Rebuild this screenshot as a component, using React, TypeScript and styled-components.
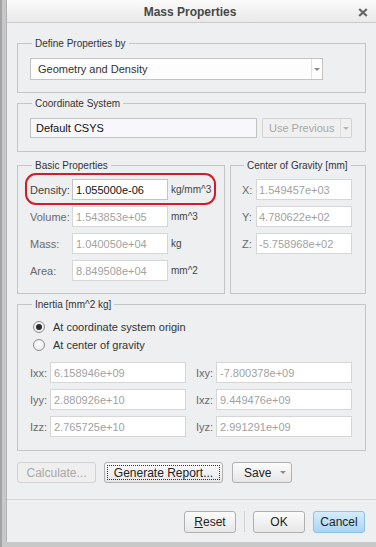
import React from 'react';
import styled, { createGlobalStyle } from 'styled-components';

const Global = createGlobalStyle`
  html, body { margin: 0; padding: 0; }
  body { font-family: "Liberation Sans", Arial, sans-serif; background: #c8c8c8; }
  * { box-sizing: border-box; }
`;

const Frame = styled.div`
  width: 376px;
  height: 547px;
  background: #c8c8c8;
  box-shadow: inset 2px 0 0 #a3a3a3;
  padding: 0 0 5px 6px;
  display: flex;
`;

const Dialog = styled.div`
  flex: 1;
  display: flex;
  flex-direction: column;
  background: #eeeff0;
  border-left: 1px solid #b2b2b2;
`;

const TitleBar = styled.div`
  flex: none;
  height: 23px;
  padding-top: 2px;
  display: grid;
  grid-template-columns: 1fr auto 1fr;
  align-items: center;
  background: linear-gradient(#fbfbfb, #e9e9e9);
  border-bottom: 1px solid #cbcbcb;
`;

const Title = styled.div`
  grid-column: 2;
  font-size: 12px;
  font-weight: bold;
  color: #474747;
  margin-right: 3px;
`;

const Close = styled.div`
  grid-column: 3;
  justify-self: end;
  margin-right: 8px;
  display: flex;
`;

const Content = styled.div`
  display: flex;
  flex-direction: column;
  padding: 14px 10px 16px 10px;
`;

const Group = styled.fieldset<{ $mt?: number; $pt?: number; $pb?: number; $pl?: number; $w?: number }>`
  margin: ${p => p.$mt ?? 0}px 0 0 0;
  min-width: 0;
  border: 1px solid #c5c5c5;
  padding: ${p => p.$pt ?? 8}px 10px ${p => p.$pb ?? 12}px ${p => p.$pl ?? 12}px;
  ${p => (p.$w ? `width: ${p.$w}px; flex: none;` : 'flex: 1;')}
`;

const Legend = styled.legend`
  font-size: 10px;
  line-height: 13px;
  color: #333;
  padding: 0 3px;
  margin-left: 2px;
`;

const Select = styled.div`
  width: 293px;
  height: 22px;
  display: flex;
  border: 1px solid #c3c3c3;
  background: #fdfdfd;
`;

const SelectText = styled.div`
  flex: 1;
  font-size: 11px;
  color: #333;
  padding-left: 7px;
  display: flex;
  align-items: center;
`;

const ArrowCell = styled.div<{ $light?: boolean }>`
  width: 11px;
  flex: none;
  display: flex;
  align-items: center;
  justify-content: center;
  border-left: 1px solid ${p => (p.$light ? '#dadada' : '#e2e2e2')};
`;

const Tri = styled.span<{ $c?: string }>`
  width: 0;
  height: 0;
  border-left: 3px solid transparent;
  border-right: 3px solid transparent;
  border-top: 3px solid ${p => p.$c ?? '#8c8c8c'};
`;

const Row = styled.div<{ $gap?: number }>`
  display: flex;
  align-items: center;
  gap: ${p => p.$gap ?? 0}px;
`;

const Field = styled.div<{ $w: number; $h?: number; $dis?: boolean; $bg?: string; $pl?: number }>`
  width: ${p => p.$w}px;
  height: ${p => p.$h ?? 21}px;
  flex: none;
  border: 1px solid ${p => (p.$dis ? '#d6d6d6' : '#c4c4c4')};
  background: ${p => p.$bg ?? '#ffffff'};
  font-size: 11px;
  color: ${p => (p.$dis ? '#a2a2a2' : '#111')};
  padding-left: ${p => p.$pl ?? 3}px;
  display: flex;
  align-items: center;
  white-space: nowrap;
`;

const DisabledDrop = styled.div`
  width: 90px;
  height: 20px;
  display: flex;
  border: 1px solid #d3d3d3;
  border-radius: 2px;
  background: #f0f0f0;
`;

const DropText = styled.div`
  flex: 1;
  font-size: 11px;
  color: #a8a8a8;
  padding-left: 6px;
  display: flex;
  align-items: center;
`;

const Columns = styled.div`
  display: flex;
  gap: 5px;
  margin-top: 7px;
`;

const Stack = styled.div<{ $gap?: number; $mt?: number }>`
  display: flex;
  flex-direction: column;
  gap: ${p => p.$gap ?? 6}px;
  margin-top: ${p => p.$mt ?? 0}px;
`;

const PropRow = styled.div`
  position: relative;
  display: flex;
  align-items: center;
`;

const Label = styled.span<{ $w: number; $dim?: boolean }>`
  width: ${p => p.$w}px;
  flex: none;
  font-size: 11px;
  color: ${p => (p.$dim ? '#6a6a6a' : '#444')};
  white-space: nowrap;
`;

const Unit = styled.span`
  margin-left: 3px;
  font-size: 10px;
  color: #444;
  white-space: nowrap;
`;

const Highlight = styled.div`
  position: absolute;
  left: -5px;
  right: -2px;
  top: -6px;
  bottom: -5px;
  border: 2px solid #d21d26;
  border-radius: 11px;
  pointer-events: none;
`;

const RadioRow = styled.div`
  height: 18px;
  display: flex;
  align-items: center;
  padding-left: 3px;
  gap: 8px;
  font-size: 11px;
  color: #333;
`;

const RadioCircle = styled.span<{ $on?: boolean }>`
  width: 12px;
  height: 12px;
  border-radius: 50%;
  border: 1px solid #8d8d8d;
  background: radial-gradient(circle at 50% 40%, #ffffff, #e4e4e4);
  display: flex;
  align-items: center;
  justify-content: center;
  &::after {
    content: '';
    display: ${p => (p.$on ? 'block' : 'none')};
    width: 6px;
    height: 6px;
    border-radius: 50%;
    background: #2b2b2b;
  }
`;

const InertiaGrid = styled.div`
  display: grid;
  grid-template-columns: 156px 156px;
  column-gap: 10px;
  row-gap: 6px;
  margin-top: 8px;
`;

const ButtonRow = styled.div`
  display: flex;
  margin-top: 11px;
`;

const Button = styled.div<{ $w: number; $h?: number; $dis?: boolean; $blue?: boolean; $ml?: number }>`
  width: ${p => p.$w}px;
  height: ${p => p.$h ?? 21}px;
  margin-left: ${p => p.$ml ?? 0}px;
  flex: none;
  display: flex;
  align-items: center;
  justify-content: center;
  border: 1px solid ${p => (p.$dis ? '#d2d2d2' : p.$blue ? '#8fc0e6' : '#b0b0b0')};
  border-radius: 3px;
  background: ${p =>
    p.$dis
      ? '#efefef'
      : p.$blue
      ? 'linear-gradient(#d6ecfc, #aad5f4)'
      : 'linear-gradient(#fbfbfb, #e7e7e7)'};
  font-size: 12px;
  color: ${p => (p.$dis ? '#a9a9a9' : '#222')};
  white-space: nowrap;
  position: relative;
`;

const Focus = styled.span`
  position: absolute;
  inset: 2px;
  border: 1px dotted #333;
  pointer-events: none;
`;

const SaveButton = styled(Button)`
  justify-content: space-between;
  padding: 0 5px 0 11px;
`;

const Divider = styled.div`
  height: 1px;
  flex: none;
  background: #d5d5d5;
`;

const Footer = styled.div`
  flex: 1;
  display: flex;
  justify-content: flex-end;
  align-items: flex-start;
  gap: 8px;
  padding: 11px 11px 0 0;
`;

const VSep = styled.div`
  width: 1px;
  height: 21px;
  background: #d3d3d3;
  align-self: flex-start;
`;

const Under = styled.span`
  text-decoration: underline;
`;

const basic = [
  { label: 'Volume:', value: '1.543853e+05', unit: 'mm^3' },
  { label: 'Mass:', value: '1.040050e+04', unit: 'kg' },
  { label: 'Area:', value: '8.849508e+04', unit: 'mm^2' },
];

const cog = [
  { label: 'X:', value: '1.549457e+03' },
  { label: 'Y:', value: '4.780622e+02' },
  { label: 'Z:', value: '-5.758968e+02' },
];

const inertia = [
  { label: 'Ixx:', value: '6.158946e+09' },
  { label: 'Ixy:', value: '-7.800378e+09' },
  { label: 'Iyy:', value: '2.880926e+10' },
  { label: 'Ixz:', value: '9.449476e+09' },
  { label: 'Izz:', value: '2.765725e+10' },
  { label: 'Iyz:', value: '2.991291e+09' },
];

export default function App() {
  return (
    <>
      <Global />
      <Frame>
        <Dialog>
          <TitleBar>
            <Title>Mass Properties</Title>
            <Close>
              <svg width="10" height="9" viewBox="0 0 10 9">
                <path d="M1.2 1 L8.8 8 M8.8 1 L1.2 8" stroke="#666666" strokeWidth="2.3" />
              </svg>
            </Close>
          </TitleBar>
          <Content>
            <Group>
              <Legend>Define Properties by</Legend>
              <Select>
                <SelectText>Geometry and Density</SelectText>
                <ArrowCell>
                  <Tri />
                </ArrowCell>
              </Select>
            </Group>

            <Group $mt={4} $pb={13}>
              <Legend>Coordinate System</Legend>
              <Row $gap={5}>
                <Field $w={227} $h={20} $bg="#f8f7fc" $pl={5}>
                  Default CSYS
                </Field>
                <DisabledDrop>
                  <DropText>Use Previous</DropText>
                  <ArrowCell $light>
                    <Tri $c="#b5b5b5" />
                  </ArrowCell>
                </DisabledDrop>
              </Row>
            </Group>

            <Columns>
              <Group $w={208} $pt={7}>
                <Legend>Basic Properties</Legend>
                <Stack>
                  <PropRow>
                    <Label $w={42}>Density:</Label>
                    <Field $w={96}>1.055000e-06</Field>
                    <Unit>kg/mm^3</Unit>
                    <Highlight />
                  </PropRow>
                  {basic.map(b => (
                    <PropRow key={b.label}>
                      <Label $w={42} $dim>
                        {b.label}
                      </Label>
                      <Field $w={96} $dis>
                        {b.value}
                      </Field>
                      <Unit>{b.unit}</Unit>
                    </PropRow>
                  ))}
                </Stack>
              </Group>
              <Group $pt={7} $pl={11}>
                <Legend>Center of Gravity [mm]</Legend>
                <Stack>
                  {cog.map(c => (
                    <PropRow key={c.label}>
                      <Label $w={14} $dim>
                        {c.label}
                      </Label>
                      <Field $w={96} $dis $pl={2}>
                        {c.value}
                      </Field>
                    </PropRow>
                  ))}
                </Stack>
              </Group>
            </Columns>

            <Group $mt={4} $pt={7} $pb={13}>
              <Legend>Inertia [mm^2 kg]</Legend>
              <RadioRow>
                <RadioCircle $on />
                At coordinate system origin
              </RadioRow>
              <RadioRow>
                <RadioCircle />
                At center of gravity
              </RadioRow>
              <InertiaGrid>
                {inertia.map(i => (
                  <PropRow key={i.label}>
                    <Label $w={20} $dim>
                      {i.label}
                    </Label>
                    <Field $w={136} $dis>
                      {i.value}
                    </Field>
                  </PropRow>
                ))}
              </InertiaGrid>
            </Group>

            <ButtonRow>
              <Button $w={79} $dis>
                Calculate...
              </Button>
              <Button $w={119} $ml={8}>
                Generate Report...
                <Focus />
              </Button>
              <SaveButton $w={60} $ml={9}>
                <span>Save</span>
                <Tri />
              </SaveButton>
            </ButtonRow>
          </Content>
          <Divider />
          <Footer>
            <Button $w={52} $h={22}>
              <Under>R</Under>eset
            </Button>
            <VSep />
            <Button $w={52} $h={22}>
              OK
            </Button>
            <Button $w={52} $h={22} $blue>
              Cancel
            </Button>
          </Footer>
        </Dialog>
      </Frame>
    </>
  );
}
